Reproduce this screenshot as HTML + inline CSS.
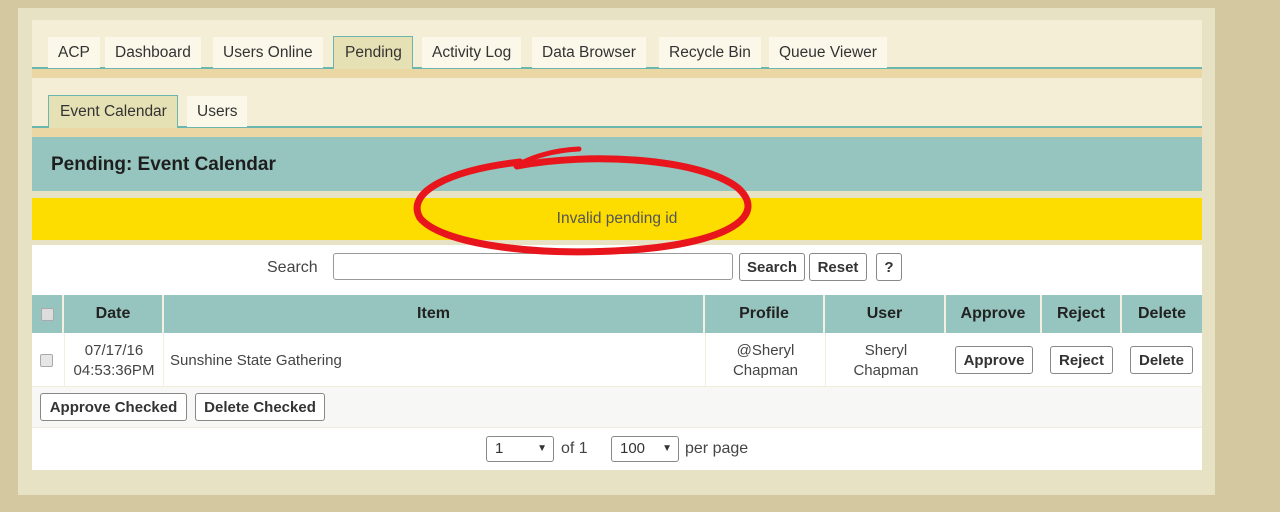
<!DOCTYPE html>
<html><head><style>
*{box-sizing:border-box;margin:0;padding:0}
body{width:1280px;height:512px;background:#d3c89f;font-family:"Liberation Sans",sans-serif;font-size:15px;color:#333;position:relative;overflow:hidden}
.a{position:absolute}
.tab{position:absolute;top:37px;height:31px;background:#fbf8ea;padding:7px 10px 0;font-size:15.5px;color:#333;white-space:nowrap}
.btn{position:absolute;border:1px solid #888;border-radius:3px;background:#fff;font-weight:bold;font-size:15px;color:#333;text-align:center;line-height:28px;height:28px}
.th{position:absolute;top:295px;height:38px;line-height:38px;text-align:center;font-weight:bold;font-size:16px;color:#222}
.td{position:absolute;top:333px;height:53px;text-align:center;font-size:15px;color:#444;line-height:20px;padding-top:8px}
.cb{position:absolute;width:13px;height:13px;border:1px solid #aaa;border-radius:2px;background:#e6e6e6}
.sel{position:absolute;top:436px;height:26px;border:1px solid #888;border-radius:3px;background:#fff;font-size:15px;line-height:24px;padding-left:8px}
</style></head><body>
<div class="a" style="left:18px;top:8px;width:1197px;height:487px;background:#e8e2c5"></div>
<div class="a" style="left:32px;top:20px;width:1170px;height:48px;background:#f3eed5"></div>
<div class="a" style="left:32px;top:67px;width:1170px;height:2px;background:#6bb7b0"></div>
<div class="a" style="left:32px;top:69px;width:1170px;height:9px;background:#ead7a4"></div>
<div class="a" style="left:32px;top:78px;width:1170px;height:49px;background:#f3eed5"></div>
<div class="a" style="left:32px;top:126px;width:1170px;height:2px;background:#6bb7b0"></div>
<div class="a" style="left:32px;top:128px;width:1170px;height:9px;background:#ead7a4"></div>
<div class="tab" style="left:48px">ACP</div>
<div class="tab" style="left:105px">Dashboard</div>
<div class="tab" style="left:213px">Users Online</div>
<div class="tab" style="left:333px;top:36px;height:33px;background:#e6e1b4;border:1px solid #6bb7b0;border-bottom:none;padding-left:11px">Pending</div>
<div class="tab" style="left:422px">Activity Log</div>
<div class="tab" style="left:532px">Data Browser</div>
<div class="tab" style="left:659px">Recycle Bin</div>
<div class="tab" style="left:769px">Queue Viewer</div>
<div class="tab" style="left:48px;top:95px;height:33px;background:#e6e1b4;border:1px solid #6bb7b0;border-bottom:none;padding-left:11px">Event Calendar</div>
<div class="tab" style="left:187px;top:96px;height:31px">Users</div>
<div class="a" style="left:32px;top:137px;width:1170px;height:54px;background:#95c5be;font-weight:bold;font-size:19px;color:#1e1e1e;padding:17px 0 0 19px">Pending: Event Calendar</div>
<div class="a" style="left:32px;top:198px;width:1170px;height:42px;background:#fddc00;text-align:center;line-height:42px;font-size:15.5px;color:#555">Invalid pending id</div>
<div class="a" style="left:32px;top:245px;width:1170px;height:225px;background:#fff"></div>
<div class="a" style="left:267px;top:259px;font-size:16px;color:#444">Search</div>
<div class="a" style="left:333px;top:253px;width:400px;height:27px;border:1px solid #999;border-radius:3px"></div>
<div class="btn" style="left:739px;top:253px;width:66px">Search</div>
<div class="btn" style="left:809px;top:253px;width:58px">Reset</div>
<div class="btn" style="left:876px;top:253px;width:26px">?</div>
<div class="a" style="left:32px;top:295px;width:1170px;height:38px;background:#95c5be"></div>
<div class="th" style="left:32px;width:32px;border-right:2px solid #f2f0e0"><div class="cb" style="left:9px;top:13px;background:#ddd"></div></div>
<div class="th" style="left:64px;width:100px;border-right:2px solid #f2f0e0">Date</div>
<div class="th" style="left:164px;width:541px;border-right:2px solid #f2f0e0">Item</div>
<div class="th" style="left:705px;width:120px;border-right:2px solid #f2f0e0">Profile</div>
<div class="th" style="left:825px;width:121px;border-right:2px solid #f2f0e0">User</div>
<div class="th" style="left:946px;width:96px;border-right:2px solid #f2f0e0">Approve</div>
<div class="th" style="left:1042px;width:80px;border-right:2px solid #f2f0e0">Reject</div>
<div class="th" style="left:1122px;width:80px">Delete</div>
<div class="cb" style="left:40px;top:354px"></div>
<div class="td" style="left:64px;width:100px;border-left:1px solid #f2efdf;border-right:1px solid #f2efdf">07/17/16<br>04:53:36PM</div>
<div class="td" style="left:170px;text-align:left;padding-top:18px">Sunshine State Gathering</div>
<div class="td" style="left:705px;width:120px;border-left:1px solid #f2efdf">@Sheryl<br>Chapman</div>
<div class="td" style="left:825px;width:121px;border-left:1px solid #f2efdf">Sheryl<br>Chapman</div>
<div class="btn" style="left:955px;top:346px;width:78px">Approve</div>
<div class="btn" style="left:1050px;top:346px;width:63px">Reject</div>
<div class="btn" style="left:1130px;top:346px;width:63px">Delete</div>
<div class="a" style="left:32px;top:386px;width:1170px;height:42px;background:#f7f7f5;border-top:1px solid #f0eddc;border-bottom:1px solid #f0eddc"></div>
<div class="btn" style="left:40px;top:393px;width:147px">Approve Checked</div>
<div class="btn" style="left:195px;top:393px;width:130px">Delete Checked</div>
<div class="sel" style="left:486px;width:68px">1<span style="position:absolute;right:6px;font-size:10px">▼</span></div>
<div class="a" style="left:561px;top:440px;font-size:16px;color:#444">of 1</div>
<div class="sel" style="left:611px;width:68px">100<span style="position:absolute;right:6px;font-size:10px">▼</span></div>
<div class="a" style="left:685px;top:440px;font-size:16px;color:#444">per page</div>
<svg class="a" style="left:0;top:0" width="1280" height="512"><path d="M579 149 C555 150 530 157 517 166" fill="none" stroke="#e8161c" stroke-width="5" stroke-linecap="round"/><path d="M517 166 C590 152 700 158 738 188 C768 215 730 243 630 250 C530 257 440 243 420 218 C405 192 450 170 520 162" fill="none" stroke="#e8161c" stroke-width="7" stroke-linecap="round"/></svg>
</body></html>
